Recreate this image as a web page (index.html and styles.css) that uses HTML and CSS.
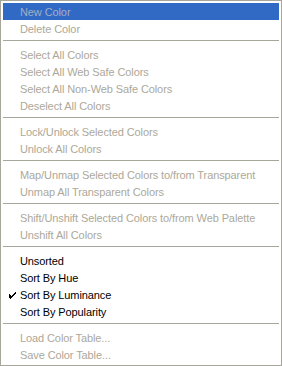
FILE: index.html
```html
<!DOCTYPE html>
<html lang="en">
<head>
  <meta charset="UTF-8" />
  <title>Color Table Menu</title>
  <link rel="stylesheet" href="styles.css">
</head>
<body>
  <!-- Color table context menu -->
  <ul class="menu">
    <li class="item disabled active">New Color</li>
    <li class="item disabled">Delete Color</li>
    <li class="sep"></li>
    <li class="item disabled">Select All Colors</li>
    <li class="item disabled">Select All Web Safe Colors</li>
    <li class="item disabled">Select All Non-Web Safe Colors</li>
    <li class="item disabled">Deselect All Colors</li>
    <li class="sep"></li>
    <li class="item disabled">Lock/Unlock Selected Colors</li>
    <li class="item disabled">Unlock All Colors</li>
    <li class="sep"></li>
    <li class="item disabled">Map/Unmap Selected Colors to/from Transparent</li>
    <li class="item disabled">Unmap All Transparent Colors</li>
    <li class="sep"></li>
    <li class="item disabled">Shift/Unshift Selected Colors to/from Web Palette</li>
    <li class="item disabled">Unshift All Colors</li>
    <li class="sep"></li>
    <li class="item">Unsorted</li>
    <li class="item">Sort By Hue</li>
    <li class="item checked">
      <svg class="check" width="7" height="7" viewBox="0 0 7 7">
        <path d="M0 2h1v1h1v1h1V3h1V2h1V1h1V0h1v2H6v1H5v1H4v1H3v1H2v1H1V6H0z" fill="#000"/>
      </svg>
      Sort By Luminance
    </li>
    <li class="item">Sort By Popularity</li>
    <li class="sep"></li>
    <li class="item disabled">Load Color Table...</li>
    <li class="item disabled">Save Color Table...</li>
  </ul>
</body>
</html>
```

FILE: styles.css
```css
:root {
  --border: #a7a69b;
  --highlight: #316ac5;
  --disabled: #aca899;
  --sep: #a7a69b;
}

body {
  margin: 0;
  background: #fff;
  font-family: "Liberation Sans", Arial, sans-serif;
  font-size: 11px;
}

.menu {
  list-style: none;
  margin: 0;
  width: 276px;
  height: 360px;
  padding: 2px;
  border: 1px solid var(--border);
  border-right-width: 2px;
  background: #fff;
}

.item {
  position: relative;
  height: 17px;
  line-height: 18px;
  padding-left: 17px;
  color: #000;
  letter-spacing: -0.1px;
  white-space: nowrap;
}

.item.disabled { color: var(--disabled); }

.item.active {
  background: var(--highlight);
  color: #a4aec4;
}

.check {
  position: absolute;
  left: 6px;
  top: 6px;
}

.sep {
  height: 9px;
  box-sizing: border-box;
  padding-top: 3px;
}
.sep::before {
  content: "";
  display: block;
  height: 1px;
  background: var(--sep);
}
```
